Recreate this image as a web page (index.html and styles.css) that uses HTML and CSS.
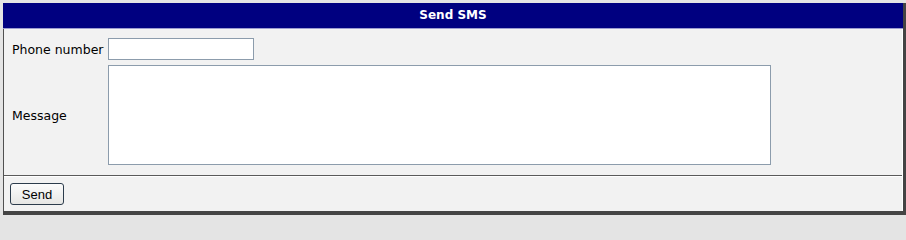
FILE: index.html
```html
<!DOCTYPE html>
<html>
<head>
<meta charset="utf-8">
<link rel="stylesheet" href="styles.css">
</head>
<body>
<div class="window">
  <div class="panel">
    <div class="title">Send SMS</div>
    <div class="body">
      <div class="form">
        <div class="row">
          <label class="label">Phone number</label>
          <input class="phone" type="text">
        </div>
        <div class="row msg-row">
          <label class="label">Message</label>
          <textarea class="message"></textarea>
        </div>
      </div>
      <div class="actions">
        <button class="btn">Send</button>
      </div>
    </div>
  </div>
</div>
</body>
</html>
```
FILE: styles.css
```css
html, body {
  margin: 0;
  padding: 0;
  background: #e4e4e4;
}
.window {
  box-sizing: border-box;
  width: 906px;
  height: 215px;
  padding: 3px 0 0 3px;
}
.panel {
  box-sizing: border-box;
  width: 903px;
  height: 212px;
  border-right: 3px solid #444444;
  border-bottom: 4px solid #444444;
  display: flex;
  flex-direction: column;
  font-family: "DejaVu Sans", Verdana, sans-serif;
  font-size: 12.5px;
  color: #000;
}
.title {
  height: 25px;
  background: #000080;
  color: #ffffff;
  font-weight: bold;
  font-size: 12px;
  line-height: 25px;
  text-align: center;
  border-bottom: 1px solid #9c9cd0;
}
.body {
  flex: 1;
  background: #f2f2f2;
  border-left: 1px solid #505050;
  border-right: 1px solid #ffffff;
  display: flex;
  flex-direction: column;
}
.form {
  height: 147px;
  box-sizing: border-box;
  padding: 9px 0 0 8px;
  border-bottom: 1px solid #5a5a5a;
  display: flex;
  flex-direction: column;
  gap: 5px;
}
.row {
  display: flex;
  align-items: center;
}
.label {
  width: 96px;
}
.phone {
  box-sizing: border-box;
  width: 146px;
  height: 22px;
  margin: 0;
  border: 1px solid #8c9cac;
  background: #fff;
  padding: 0 2px;
}
.message {
  box-sizing: border-box;
  width: 663px;
  height: 100px;
  margin: 0;
  border: 1px solid #8c9cac;
  background: #fff;
  resize: none;
}
.actions {
  flex: 1;
  border-top: 1px solid #ffffff;
  padding: 6px 0 0 6px;
}
.btn {
  box-sizing: border-box;
  width: 54px;
  height: 22px;
  margin: 0;
  padding: 0;
  border: 1px solid #2c3c4c;
  border-radius: 3px;
  background: linear-gradient(#fcfcfc, #e6e6e4);
  font-family: "Liberation Sans", Arial, sans-serif;
  font-size: 13px;
  color: #000;
}
```
